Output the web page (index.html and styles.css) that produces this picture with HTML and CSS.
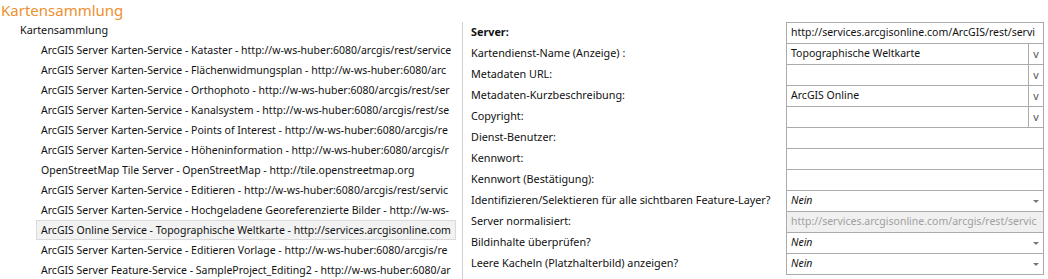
FILE: index.html
```html
<!DOCTYPE html>
<html lang="de">
<head>
    <meta charset="UTF-8">
    <title>Kartensammlung</title>
    <link rel="stylesheet" href="styles.css">
</head>
<body>
    <h1 class="page-title">Kartensammlung</h1>
    <div class="main">
        <div class="tree">
            <div class="tree-root">Kartensammlung</div>
            <div class="tree-item">ArcGIS Server Karten-Service - Kataster - http://w-ws-huber:6080/arcgis/rest/service</div>
            <div class="tree-item">ArcGIS Server Karten-Service - Flächenwidmungsplan - http://w-ws-huber:6080/arc</div>
            <div class="tree-item">ArcGIS Server Karten-Service - Orthophoto - http://w-ws-huber:6080/arcgis/rest/ser</div>
            <div class="tree-item">ArcGIS Server Karten-Service - Kanalsystem - http://w-ws-huber:6080/arcgis/rest/se</div>
            <div class="tree-item">ArcGIS Server Karten-Service - Points of Interest - http://w-ws-huber:6080/arcgis/re</div>
            <div class="tree-item">ArcGIS Server Karten-Service - Höheninformation - http://w-ws-huber:6080/arcgis/r</div>
            <div class="tree-item">OpenStreetMap Tile Server - OpenStreetMap - http://tile.openstreetmap.org</div>
            <div class="tree-item">ArcGIS Server Karten-Service - Editieren - http://w-ws-huber:6080/arcgis/rest/servic</div>
            <div class="tree-item">ArcGIS Server Karten-Service - Hochgeladene Georeferenzierte Bilder - http://w-ws-</div>
            <div class="tree-item selected">ArcGIS Online Service - Topographische Weltkarte - http://services.arcgisonline.com</div>
            <div class="tree-item">ArcGIS Server Karten-Service - Editieren Vorlage - http://w-ws-huber:6080/arcgis/re</div>
            <div class="tree-item">ArcGIS Server Feature-Service - SampleProject_Editing2 - http://w-ws-huber:6080/ar</div>
        </div>
        <div class="props">
            <div class="label bold">Server:</div>
            <div class="field"><span class="value">http://services.arcgisonline.com/ArcGIS/rest/servi</span></div>

            <div class="label">Kartendienst-Name (Anzeige) :</div>
            <div class="field"><span class="value">Topographische Weltkarte</span><span class="drop-btn">v</span></div>

            <div class="label">Metadaten URL:</div>
            <div class="field"><span class="value"></span><span class="drop-btn">v</span></div>

            <div class="label">Metadaten-Kurzbeschreibung:</div>
            <div class="field"><span class="value">ArcGIS Online</span><span class="drop-btn">v</span></div>

            <div class="label">Copyright:</div>
            <div class="field"><span class="value"></span><span class="drop-btn">v</span></div>

            <div class="label">Dienst-Benutzer:</div>
            <div class="field"><span class="value"></span></div>

            <div class="label">Kennwort:</div>
            <div class="field"><span class="value"></span></div>

            <div class="label">Kennwort (Bestätigung):</div>
            <div class="field"><span class="value"></span></div>

            <div class="label">Identifizieren/Selektieren für alle sichtbaren Feature-Layer?</div>
            <div class="field"><span class="value italic">Nein</span><span class="arrow"></span></div>

            <div class="label">Server normalisiert:</div>
            <div class="field disabled"><span class="value">http://services.arcgisonline.com/arcgis/rest/servic</span></div>

            <div class="label">Bildinhalte überprüfen?</div>
            <div class="field"><span class="value italic">Nein</span><span class="arrow"></span></div>

            <div class="label">Leere Kacheln (Platzhalterbild) anzeigen?</div>
            <div class="field"><span class="value italic">Nein</span><span class="arrow"></span></div>
        </div>
    </div>
</body>
</html>
```

FILE: styles.css
```css
body {
    margin: 0;
    background-color: white;
    color: #111;
    font-family: "Noto Sans", "Open Sans", sans-serif;
    font-size: 10.8px;
    width: 1048px;
    height: 279px;
    overflow: hidden;
}
.page-title {
    margin: 0;
    height: 20px;
    padding-left: 1px;
    font-size: 15px;
    font-weight: normal;
    line-height: 21px;
    color: #ee9030;
}
.main {
    display: flex;
}
.tree {
    width: 462px;
    flex-shrink: 0;
    padding-right: 6px;
    box-sizing: border-box;
}
.tree-root {
    height: 20px;
    line-height: 20px;
    padding-left: 20px;
}
.tree-item {
    height: 20px;
    box-sizing: border-box;
    line-height: 18px;
    font-size: 10.5px;
    margin-left: 36px;
    padding-left: 4px;
    border: 1px solid transparent;
    white-space: nowrap;
    overflow: hidden;
}
.tree-item.selected {
    background-color: #f2f2f2;
    border-color: #dadada;
}
.props {
    flex: 1;
    margin-top: 2px;
    border-left: 1px solid #cfcfcf;
    display: grid;
    grid-template-columns: 323px 258px;
    grid-auto-rows: 21px;
    align-content: start;
}
.label {
    padding-left: 8px;
    line-height: 20px;
    white-space: nowrap;
}
.bold {
    font-weight: bold;
}
.field {
    display: flex;
    border: 1px solid #ababab;
    height: 22px;
    box-sizing: border-box;
    margin-bottom: -1px;
    overflow: hidden;
}
.value {
    flex: 1;
    padding-left: 4px;
    line-height: 19px;
    font-size: 10.5px;
    white-space: nowrap;
    overflow: hidden;
}
.italic {
    font-style: italic;
}
.drop-btn {
    width: 14px;
    border-left: 1px solid #ababab;
    text-align: center;
    line-height: 19px;
    color: #555;
}
.arrow {
    width: 12px;
    position: relative;
}
.arrow::after {
    content: "";
    position: absolute;
    top: 9px;
    left: 2px;
    border-left: 3px solid transparent;
    border-right: 3px solid transparent;
    border-top: 3px solid #777;
}
.field.disabled {
    background-color: #f0f0f0;
    color: #a0a0a0;
}
```
